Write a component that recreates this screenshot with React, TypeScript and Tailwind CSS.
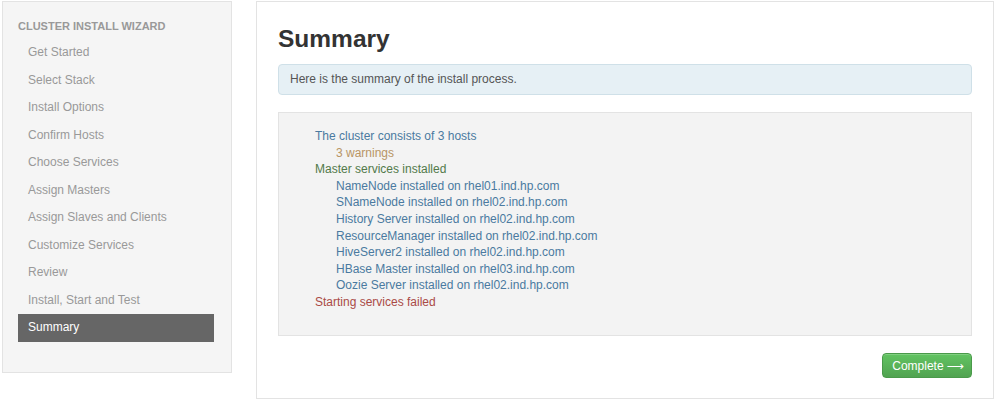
import React from "react";

const STEPS = [
  "Get Started",
  "Select Stack",
  "Install Options",
  "Confirm Hosts",
  "Choose Services",
  "Assign Masters",
  "Assign Slaves and Clients",
  "Customize Services",
  "Review",
  "Install, Start and Test",
  "Summary",
];

const MASTERS = [
  "NameNode installed on rhel01.ind.hp.com",
  "SNameNode installed on rhel02.ind.hp.com",
  "History Server installed on rhel02.ind.hp.com",
  "ResourceManager installed on rhel02.ind.hp.com",
  "HiveServer2 installed on rhel02.ind.hp.com",
  "HBase Master installed on rhel03.ind.hp.com",
  "Oozie Server installed on rhel02.ind.hp.com",
];

function Sidebar({ active }: { active: string }) {
  return (
    <div className="mt-px ml-[2px] h-[372px] w-[230px] shrink-0 border border-[#e3e3e3] bg-[#f5f5f5] pl-[15px] pt-[13px]">
      <div className="h-[24px] text-[11px] leading-[22px] font-bold uppercase text-[#999]">
        Cluster Install Wizard
      </div>
      <ul>
        {STEPS.map((s) => (
          <li
            key={s}
            className={
              s === active
                ? "h-[27.5px] w-[196px] bg-[#666] pl-[10px] text-[12px] leading-[27.5px] text-white"
                : "h-[27.5px] w-[196px] pl-[10px] text-[12px] leading-[27.5px] text-[#999]"
            }
          >
            {s}
          </li>
        ))}
      </ul>
    </div>
  );
}

export default function App() {
  return (
    <div className="flex h-[400px] w-[999px] gap-[24px] bg-white font-['Liberation_Sans',Arial,sans-serif]">
      <Sidebar active="Summary" />

      <div className="mt-px flex h-[398px] w-[738px] flex-col border border-[#e3e3e3] bg-white px-[21px] pt-[22px]">
        <h2 className="text-[24.5px] leading-[30px] font-bold text-[#333]">Summary</h2>

        {/* intro alert */}
        <div className="mt-[10px] h-[31px] rounded-[4px] border border-[#cfe0e8] bg-[#e6f0f5] pl-[11px] text-[12px] leading-[29px] text-[#555]">
          Here is the summary of the install process.
        </div>

        {/* install log */}
        <div className="mt-[17px] h-[224px] border border-[#e3e3e3] bg-[#f3f3f3] pt-[15px] pl-[36px] text-[12px] leading-[16.6px]">
          <div className="text-[#4a7aa0]">The cluster consists of 3 hosts</div>
          <div className="pl-[21px] text-[#b89565]">3 warnings</div>
          <div className="text-[#527a4a]">Master services installed</div>
          {MASTERS.map((m) => (
            <div key={m} className="pl-[21px] text-[#4a7aa0]">
              {m}
            </div>
          ))}
          <div className="text-[#aa4a46]">Starting services failed</div>
        </div>

        <div className="mt-[17px] flex justify-end">
          <button className="flex h-[25px] w-[90px] items-center justify-center gap-[3px] rounded-[4px] border border-[#4a9a4a] bg-gradient-to-b from-[#62c462] to-[#51a351] pl-[2px] text-[12px] text-white shadow-[inset_0_1px_0_rgba(255,255,255,0.2)]">
            Complete
            <span className="font-['DejaVu_Sans',sans-serif] text-[12px] leading-none">⟶</span>
          </button>
        </div>
      </div>
    </div>
  );
}
